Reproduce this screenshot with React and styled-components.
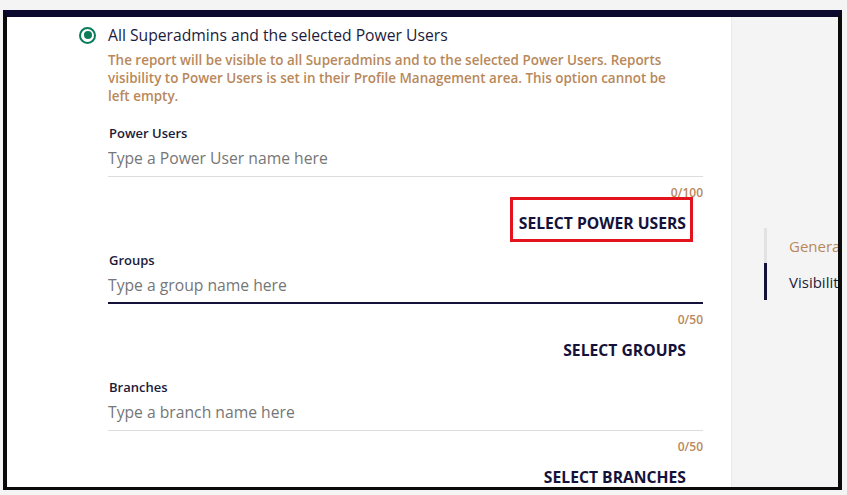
import React from "react";
import styled, { createGlobalStyle } from "styled-components";

const Global = createGlobalStyle`
  html, body { margin: 0; padding: 0; background: #f4f4f4; }
  body { font-family: "Open Sans", "Noto Sans", sans-serif; }
  * { box-sizing: border-box; }
`;

const NAVY = "#14123b";
const TAN = "#b8885b";

const Frame = styled.div`
  margin: 10px 0 0 3px;
  width: 839px;
  height: 480px;
  border-left: 4px solid #0a0a0a;
  border-right: 4px solid #0a0a0a;
  border-bottom: 3px solid #0a0a0a;
  border-top: 7px solid #0b0a2e;
  display: flex;
  overflow: hidden;
  background: #fff;
`;

const Main = styled.main`
  width: 724px;
  flex-shrink: 0;
  padding: 7px 28px 0 72px;
  background: #fff;
`;

const Sidebar = styled.aside`
  flex: 1;
  background: #f4f4f4;
  box-shadow: inset 1px 0 0 #ebebeb;
  padding: 211px 0 0 33px;
  overflow: hidden;
`;

const RadioRow = styled.label`
  display: flex;
  align-items: center;
  gap: 12px;
  height: 22px;
`;

const RadioCircle = styled.span`
  width: 17px;
  height: 17px;
  border-radius: 50%;
  border: 2.5px solid #0a7c5a;
  display: flex;
  align-items: center;
  justify-content: center;
  flex-shrink: 0;
  &::after {
    content: "";
    width: 8px;
    height: 8px;
    border-radius: 50%;
    background: #0a7c5a;
  }
`;

const RadioText = styled.span`
  font-size: 15.7px;
  line-height: 22px;
  color: #1c1b3c;
`;

const Indented = styled.div`
  margin-left: 29px;
`;

const Description = styled.p`
  margin: 5px 0 0;
  max-width: 575px;
  font-size: 13.45px;
  line-height: 18px;
  font-weight: 600;
  color: ${TAN};
`;

const Fields = styled.div`
  margin-top: 19px;
  display: flex;
  flex-direction: column;
`;

const Field = styled.div`
  display: flex;
  flex-direction: column;
  margin-bottom: 10px;
`;

const Label = styled.div`
  font-size: 13px;
  line-height: 18px;
  font-weight: 600;
  color: #1b1a3a;
  padding-left: 1px;
`;

const InputWrap = styled.div`
  margin-top: 4px;
  padding-bottom: ${(p) => (p.$focused ? "5px" : "6px")};
  border-bottom: ${(p) => (p.$focused ? `2px solid ${NAVY}` : "1px solid #dddddd")};
`;

const Input = styled.input`
  display: block;
  width: 100%;
  height: 24px;
  border: none;
  outline: none;
  padding: 0;
  font-family: "Open Sans", sans-serif;
  font-size: 15.7px;
  color: #333;
  background: transparent;
  &::placeholder { color: #767676; }
`;

const Counter = styled.div`
  margin-top: 8px;
  text-align: right;
  font-size: 12px;
  line-height: 16px;
  font-weight: 600;
  color: ${TAN};
`;

const ButtonRow = styled.div`
  margin-top: 4px;
  display: flex;
  justify-content: flex-end;
`;

const SelectButton = styled.button`
  position: relative;
  height: 36px;
  padding: 0 17px 0 16px;
  border: none;
  background: transparent;
  font-family: "Open Sans", sans-serif;
  font-size: 15.7px;
  font-weight: 700;
  color: ${NAVY};
  cursor: pointer;
`;

const Highlight = styled.span`
  position: absolute;
  left: 7px;
  right: 10px;
  top: -8px;
  bottom: -1px;
  border: 3px solid #e3141e;
  pointer-events: none;
`;

const Nav = styled.nav`
  display: flex;
  flex-direction: column;
`;

const NavItem = styled.div`
  border-left: 3px solid ${(p) => (p.$active ? NAVY : "#e2e2e2")};
  height: ${(p) => (p.$active ? "37px" : "35px")};
  padding-left: 22px;
  display: flex;
  align-items: center;
  font-size: 15px;
  white-space: nowrap;
  color: ${(p) => (p.$active ? "#1c1b3c" : TAN)};
`;

const fields = [
  { label: "Power Users", placeholder: "Type a Power User name here", max: 100, button: "SELECT POWER USERS", highlight: true },
  { label: "Groups", placeholder: "Type a group name here", max: 50, button: "SELECT GROUPS", focused: true },
  { label: "Branches", placeholder: "Type a branch name here", max: 50, button: "SELECT BRANCHES" },
];

export default function App() {
  return (
    <>
      <Global />
      <Frame>
        <Main>
          <RadioRow>
            <RadioCircle />
            <RadioText>All Superadmins and the selected Power Users</RadioText>
          </RadioRow>
          <Indented>
            <Description>
              The report will be visible to all Superadmins and to the selected Power Users. Reports
              visibility to Power Users is set in their Profile Management area. This option cannot be
              left empty.
            </Description>
            <Fields>
              {fields.map((f) => (
                <Field key={f.label}>
                  <Label>{f.label}</Label>
                  <InputWrap $focused={f.focused}>
                    <Input placeholder={f.placeholder} />
                  </InputWrap>
                  <Counter>0/{f.max}</Counter>
                  <ButtonRow>
                    <SelectButton>
                      {f.button}
                      {f.highlight && <Highlight />}
                    </SelectButton>
                  </ButtonRow>
                </Field>
              ))}
            </Fields>
          </Indented>
        </Main>
        <Sidebar>
          <Nav>
            <NavItem>General</NavItem>
            <NavItem $active>Visibility</NavItem>
          </Nav>
        </Sidebar>
      </Frame>
    </>
  );
}
